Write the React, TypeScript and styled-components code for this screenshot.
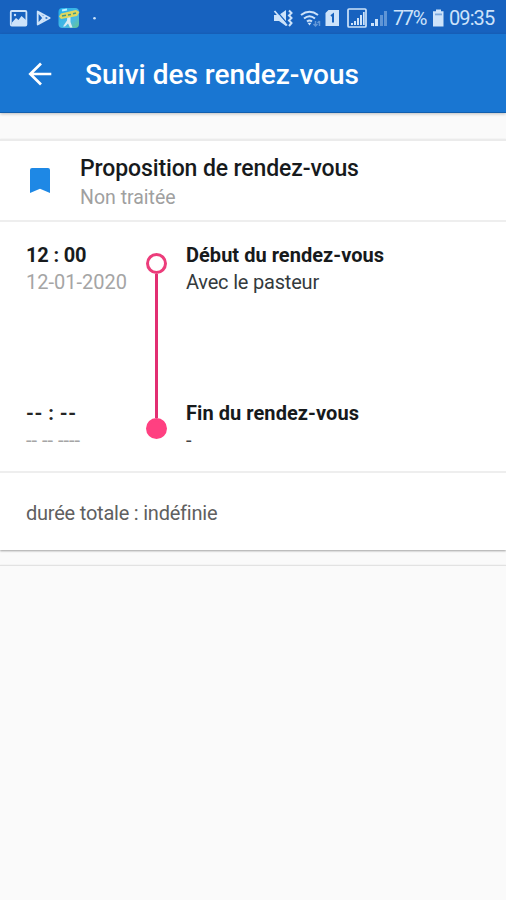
import React from 'react';
import styled, { createGlobalStyle } from 'styled-components';

const GlobalStyle = createGlobalStyle`
  * { box-sizing: border-box; }
  body { margin: 0; background: #fafafa; font-family: Roboto, sans-serif; }
`;

const Screen = styled.div`
  width: 506px;
  height: 900px;
  overflow: hidden;
  background: #fafafa;
`;

const StatusBar = styled.header`
  height: 34px;
  display: flex;
  align-items: center;
  justify-content: space-between;
  padding: 1px 11px 0 9px;
  background: #1762bf;
  color: #cde3fa;
`;

const StatusIcons = styled.svg`
  display: block;
  flex: none;
`;

const StatusRight = styled.div`
  display: flex;
  align-items: center;
`;

const StatusText = styled.span<{ $width: number; $tracking?: number }>`
  width: ${({ $width }) => $width}px;
  font-size: 20px;
  line-height: 34px;
  letter-spacing: ${({ $tracking = 0 }) => $tracking}px;
  white-space: nowrap;
`;

const AppBar = styled.nav`
  position: relative;
  height: 79px;
  display: flex;
  align-items: center;
  padding: 2px 27px 0;
  background: #1976d2;
  border-bottom: 1px solid #125fae;
  box-shadow: 0 1px 3px rgba(0, 0, 0, 0.24);
  color: #fff;
`;

const BackButton = styled.button`
  width: 58px;
  padding: 0;
  border: 0;
  background: none;
  color: inherit;
  display: flex;
`;

const Title = styled.h1`
  margin: 0;
  padding-top: 2px;
  font-size: 28px;
  font-weight: 500;
  line-height: 34px;
  white-space: nowrap;
`;

const Card = styled.section`
  margin-top: 26px;
  height: 411px;
  border-top: 2px solid #ebebeb;
  background: #fff;
  box-shadow: 0 1px 2px rgba(0, 0, 0, 0.36);
`;

const CardHeader = styled.div`
  height: 81px;
  display: flex;
  align-items: center;
  padding-left: 30px;
  border-bottom: 2px solid #eee;
`;

const HeaderText = styled.div`
  padding: 5px 0 0 30px;
`;

type LineProps = {
  $size: number;
  $line: number;
  $color: string;
  $weight?: number;
  $tracking?: number;
};

const Line = styled.div<LineProps>`
  margin: 0;
  font-size: ${({ $size }) => $size}px;
  line-height: ${({ $line }) => $line}px;
  color: ${({ $color }) => $color};
  font-weight: ${({ $weight = 400 }) => $weight};
  letter-spacing: ${({ $tracking = 0 }) => $tracking}px;
  white-space: nowrap;
`;

const Timeline = styled.div`
  height: 251px;
  display: grid;
  grid-template-columns: 119px 41px 1fr;
  padding: 20px 0 0 26px;
  border-bottom: 2px solid #eee;
`;

const Column = styled.div`
  display: grid;
  grid-template-rows: 158px 60px;
  align-content: start;
`;

const Rail = styled.div`
  display: flex;
  flex-direction: column;
  align-items: center;
  width: 22px;
  height: 197px;
  padding-top: 11px;
`;

const Dot = styled.i<{ $filled?: boolean }>`
  flex: none;
  width: 21px;
  height: 21px;
  border: 3px solid ${({ $filled }) => ($filled ? '#ff4081' : '#ec3d7b')};
  border-radius: 50%;
  background: ${({ $filled }) => ($filled ? '#ff4081' : '#fff')};
`;

const Connector = styled.i`
  flex: 1;
  width: 3px;
  background: #e22f72;
`;

const CardFooter = styled.footer`
  padding: 27px 26px 0;
`;

const NextCard = styled.section`
  margin-top: 15px;
  border-top: 1px solid #e2e2e2;
  box-shadow: 0 -1px 1px rgba(0, 0, 0, 0.03);
`;

function LeftStatus() {
  return (
    <StatusIcons width="94" height="30" viewBox="9 2 94 30">
      <rect x="10.8" y="10" width="15.6" height="14.500" rx="1" fill="none" stroke="currentColor" strokeWidth="1.8" />
      <path d="M12 21.500l4-4.500 2.500 2 3-4 4.500 4v5H12z" fill="currentColor" />
      <circle cx="15" cy="14" r="1.2" fill="currentColor" />
      <path d="M37.700 10.500v13l12-6.500zM38 11l7.500 8.500M38 23l7.500-8.500M41 14.500l4 2.500-4 3" fill="none" stroke="currentColor" strokeWidth="1.8" strokeLinejoin="round" />
      <defs>
        <linearGradient id="sign" x1="0" y1="0" x2="1" y2="1">
          <stop stopColor="#22aeea" />
          <stop offset=".65" stopColor="#49b9e3" />
          <stop offset="1" stopColor="#69c58d" />
        </linearGradient>
      </defs>
      <rect x="58.500" y="7" width="20.500" height="20" rx="4" fill="url(#sign)" />
      <path d="M67.500 12h3v9l2 5.500h-2.500l-2-4-3 3h-2l4-6z" fill="#d9ebf2" />
      <path d="M61 12.500l15-3.500 3.500 2-2.500 4-16 3-2-2.500z" fill="#e0d75e" />
      <path d="M62 15l4-.7M68 14l3-.6M73 12.700l3-.7" stroke="#3e9a88" strokeWidth="1.500" />
      <path d="M62 9.500l5-1" stroke="#b9f0ff" strokeWidth="2" />
      <circle cx="94.500" cy="17.300" r="1.300" fill="currentColor" />
    </StatusIcons>
  );
}

function SignalIcons() {
  return (
    <StatusIcons width="121" height="30" viewBox="271 2 121 30">
      <g fill="none" stroke="currentColor" strokeWidth="2">
        <path d="M273 14h5l7-5v16l-7-5h-5z" fill="currentColor" stroke="none" />
        <path d="M275.500 10l12 14" stroke="#1762bf" strokeWidth="1.300" />
        <path d="M273.500 10l12.500 14.500" strokeWidth="1.800" />
        <path d="M288 9.500l2.500 2.500-2.500 2.500 2.500 2.500-2.500 2.500 2.500 2.500-2.500 3" strokeWidth="2" />
        <path d="M300 14q8.500-6.500 17 0M303 17.500q5.500-4.500 11 0M306 20.500q2.500-2 5 0" />
        <path d="M308.500 24.500l-2-2.700h4z" fill="currentColor" stroke="none" />
        <path d="M314.500 20v5m-2-2l2 2 2-2M318.500 25v-5m-2 2l2-2" opacity=".42" strokeWidth="1.500" />
      </g>
      <path d="M327.500 9h10.500v16h-13.500V12z" fill="currentColor" />
      <path d="M330 15l2-1.500v8" fill="none" stroke="#1762bf" strokeWidth="2" />
      <rect x="347" y="8" width="18" height="18" rx="1" fill="none" stroke="currentColor" strokeWidth="1.700" />
      <path d="M350 22h2v2h-2zM353 20h2v4h-2zM356 17h2v7h-2zM359 14h2v10h-2zM362 11h1.700v13H362z" fill="currentColor" />
      <path d="M370 22h3v3h-3zM374 18h3v7h-3z" fill="currentColor" />
      <path d="M379 14h3v11h-3zM383 10h3v15h-3z" fill="currentColor" opacity=".4" />
    </StatusIcons>
  );
}

function Battery() {
  return (
    <StatusIcons width="19" height="30" viewBox="429 2 19 30">
      <path d="M435 8.500h5v1.700h2.500v15.300H432V10.200h3z" fill="currentColor" />
      <path d="M434 12.500h7v1.800h-7z" fill="#1762bf" opacity=".45" />
    </StatusIcons>
  );
}

export default function App() {
  return (
    <Screen>
      <GlobalStyle />
      <StatusBar>
        <LeftStatus />
        <StatusRight>
          <SignalIcons />
          <StatusText $width={37} $tracking={-1.4}>77%</StatusText>
          <Battery />
          <StatusText $width={46} $tracking={-0.9}>09:35</StatusText>
        </StatusRight>
      </StatusBar>
      <AppBar>
        <BackButton aria-label="Retour">
          <svg width="26" height="26" viewBox="27 61 26 26" fill="none" stroke="currentColor" strokeWidth="2.700">
            <path d="M51.300 74H30.500M41 63.500L30.300 74 41 84.500" />
          </svg>
        </BackButton>
        <Title>Suivi des rendez-vous</Title>
      </AppBar>
      <Card>
        <CardHeader>
          <svg width="20" height="26" viewBox="30 168 20 26">
            <path d="M32 168h16q2 0 2 2v23l-10-4.300-10 4.300v-23q0-2 2-2z" fill="#1e88e5" />
          </svg>
          <HeaderText>
            <Line as="h2" $size={23} $line={28} $color="#171a1c" $weight={500} $tracking={-0.12}>Proposition de rendez-vous</Line>
            <Line $size={19.5} $line={29} $color="#a0a0a0">Non traitée</Line>
          </HeaderText>
        </CardHeader>
        <Timeline>
          <Column>
            <div>
              <Line $size={20} $line={27} $color="#181b1d" $weight={700} $tracking={-0.15}>12 : 00</Line>
              <Line $size={20} $line={27} $color="#a5a5a5">12-01-2020</Line>
            </div>
            <div>
              <Line $size={20} $line={27} $color="#252525" $weight={700} $tracking={0.5}>-- : --</Line>
              <Line $size={20} $line={26} $color="#a5a5a5">-- -- ----</Line>
            </div>
          </Column>
          <Rail>
            <Dot />
            <Connector />
            <Dot $filled />
          </Rail>
          <Column>
            <div>
              <Line $size={20} $line={27} $color="#171a1c" $weight={700} $tracking={0.03}>Début du rendez-vous</Line>
              <Line $size={20} $line={27} $color="#343a3d" $tracking={-0.2}>Avec le pasteur</Line>
            </div>
            <div>
              <Line $size={20} $line={27} $color="#171a1c" $weight={700} $tracking={0.06}>Fin du rendez-vous</Line>
              <Line $size={20} $line={26} $color="#444">-</Line>
            </div>
          </Column>
        </Timeline>
        <CardFooter>
          <Line $size={20} $line={27} $color="#606060" $tracking={-0.22}>durée totale : indéfinie</Line>
        </CardFooter>
      </Card>
      <NextCard />
    </Screen>
  );
}
